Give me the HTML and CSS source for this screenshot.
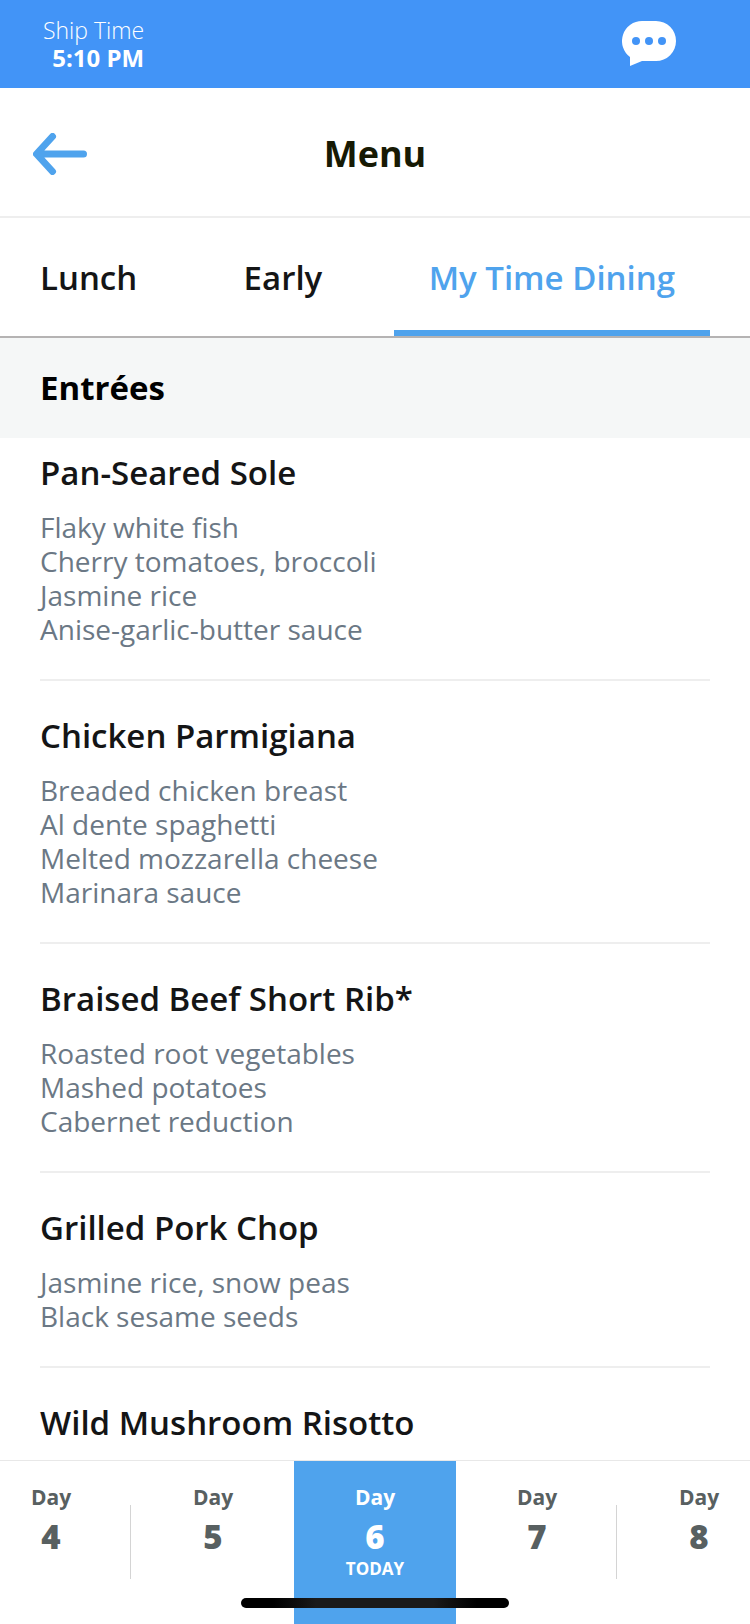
FILE: index.html
```
<!DOCTYPE html>
<html lang="en">
<head>
    <meta charset="UTF-8">
    <meta name="viewport" content="width=device-width, initial-scale=1.0">
    <title>Menu</title>
    <link rel="stylesheet" href="styles.css">
</head>
<body>
    <div class="status-bar">
        <div class="ship-time">
            <span>Ship Time</span>
            <strong>5:10 PM</strong>
        </div>
        <button class="icon-button" type="button" aria-label="Chat">
            <svg width="54" height="46" viewBox="0 0 54 46" aria-hidden="true">
                <path fill="#fff" d="M20 0h14a20 20 0 0 1 0 40H20L8 45V36A20 20 0 0 1 20 0z"/>
                <g fill="#4294f7">
                    <circle cx="14" cy="20" r="4"/>
                    <circle cx="27" cy="20" r="4"/>
                    <circle cx="40" cy="20" r="4"/>
                </g>
            </svg>
        </button>
    </div>

    <header class="title-bar">
        <button class="icon-button" type="button" aria-label="Back">
            <svg width="54" height="42" viewBox="0 0 54 42" aria-hidden="true">
                <path fill="none" stroke="#4fa3ed" stroke-width="7" stroke-linecap="round" stroke-linejoin="round" d="M50.500 21H4M19.500 3.500L3.500 21L19.500 38.500"/>
            </svg>
        </button>
        <h1>Menu</h1>
    </header>

    <nav class="tabs">
        <button class="tab" type="button">Lunch</button>
        <button class="tab" type="button">Early</button>
        <button class="tab active" type="button" aria-current="true">My Time Dining</button>
    </nav>

    <main class="menu">
        <h2>Entrées</h2>
        <ul class="dishes">
            <li class="dish">
                <h3>Pan-Seared Sole</h3>
                <p>Flaky white fish<br>Cherry tomatoes, broccoli<br>Jasmine rice<br>Anise-garlic-butter sauce</p>
            </li>
            <li class="dish">
                <h3>Chicken Parmigiana</h3>
                <p>Breaded chicken breast<br>Al dente spaghetti<br>Melted mozzarella cheese<br>Marinara sauce</p>
            </li>
            <li class="dish">
                <h3>Braised Beef Short Rib*</h3>
                <p>Roasted root vegetables<br>Mashed potatoes<br>Cabernet reduction</p>
            </li>
            <li class="dish">
                <h3>Grilled Pork Chop</h3>
                <p>Jasmine rice, snow peas<br>Black sesame seeds</p>
            </li>
            <li class="dish">
                <h3>Wild Mushroom Risotto</h3>
            </li>
        </ul>
    </main>

    <nav class="days" aria-label="Cruise days">
        <button class="day divided" type="button">Day <b>4</b></button>
        <button class="day" type="button">Day <b>5</b></button>
        <button class="day today" type="button" aria-current="date">Day <b>6</b> <small>TODAY</small></button>
        <button class="day divided" type="button">Day <b>7</b></button>
        <button class="day" type="button">Day <b>8</b></button>
        <div class="home-indicator"></div>
    </nav>
</body>
</html>
```
FILE: styles.css
```
* {
    box-sizing: border-box;
}

body {
    display: flex;
    flex-direction: column;
    height: 100vh;
    margin: 0;
    background: #fff;
    color: #141516;
    font-family: "Open Sans", sans-serif;
}

h1, h2, h3, p, ul {
    margin: 0;
    padding: 0;
}

button {
    border: 0;
    background: none;
    color: inherit;
    font: inherit;
    cursor: pointer;
}

.icon-button {
    padding: 0;
}

.icon-button svg {
    display: block;
}

/* Top bar */
.status-bar {
    display: flex;
    justify-content: space-between;
    align-items: center;
    padding: 16px 74px 16px 43px;
    background: #4294f7;
    color: #fff;
}

.ship-time {
    display: flex;
    flex-direction: column;
    align-items: flex-end;
    font-size: 23px;
    font-weight: 300;
    line-height: 28px;
}

.ship-time strong {
    font-size: 24px;
    font-weight: 700;
}

.title-bar {
    display: grid;
    grid-template-columns: 1fr auto 1fr;
    align-items: center;
    padding: 42px 33px 38px;
    border-bottom: 2px solid #eee;
}

.title-bar .icon-button {
    justify-self: start;
}

h1 {
    color: #171a04;
    font-size: 36px;
    font-weight: 700;
    line-height: 48px;
}

/* Dining tabs */
.tabs {
    display: flex;
    justify-content: space-between;
    padding: 0 40px 0 5px;
    border-bottom: 2px solid #b5b3b3;
}

.tab {
    padding: 40px 35px 32px;
    border-bottom: 6px solid transparent;
    font-size: 33px;
    font-weight: 600;
    line-height: 40px;
}

.tab.active {
    border-color: #4fa3ed;
    color: #4fa3ed;
}

/* Dishes */
.menu {
    flex: 1;
    min-height: 0;
    overflow-y: auto;
    scrollbar-width: none;
}

h2 {
    padding: 30px 40px;
    background: #f5f7f7;
    color: #000;
    font-size: 33px;
    font-weight: 700;
    line-height: 40px;
}

.dishes {
    padding: 0 40px;
    list-style: none;
}

.dish {
    padding: 35px 0 33px;
    border-bottom: 2px solid #eee;
}

.dish:first-child {
    padding-top: 15px;
}

.dish:last-child {
    border-bottom: 0;
}

h3 {
    font-size: 33px;
    font-weight: 600;
    line-height: 40px;
}

.dish p {
    margin-top: 17px;
    color: #6b7885;
    font-size: 28px;
    line-height: 34px;
}

/* Day picker */
.days {
    position: relative;
    display: flex;
    justify-content: center;
    overflow: hidden;
    border-top: 1px solid #e8e8e8;
    color: #586061;
}

.day {
    display: flex;
    flex: 0 0 162px;
    flex-direction: column;
    align-items: center;
    padding: 21px 0 48px;
    font-size: 21px;
    font-weight: 700;
    line-height: 30px;
}

.day b {
    font-size: 33px;
    line-height: 50px;
}

.day small {
    font-size: 17px;
    line-height: 14px;
}

.divided {
    background: linear-gradient(#d4d4d4, #d4d4d4) 160px 44px / 1px 74px no-repeat;
}

.today {
    background: #4fa3ed;
    color: #fff;
}

.home-indicator {
    position: absolute;
    bottom: 16px;
    left: 50%;
    width: 268px;
    height: 10px;
    border-radius: 5px;
    background: linear-gradient(90deg, #000 12%, #1a1a1a 28%, #1a1a1a 72%, #000 88%);
    transform: translateX(-50%);
}
```
